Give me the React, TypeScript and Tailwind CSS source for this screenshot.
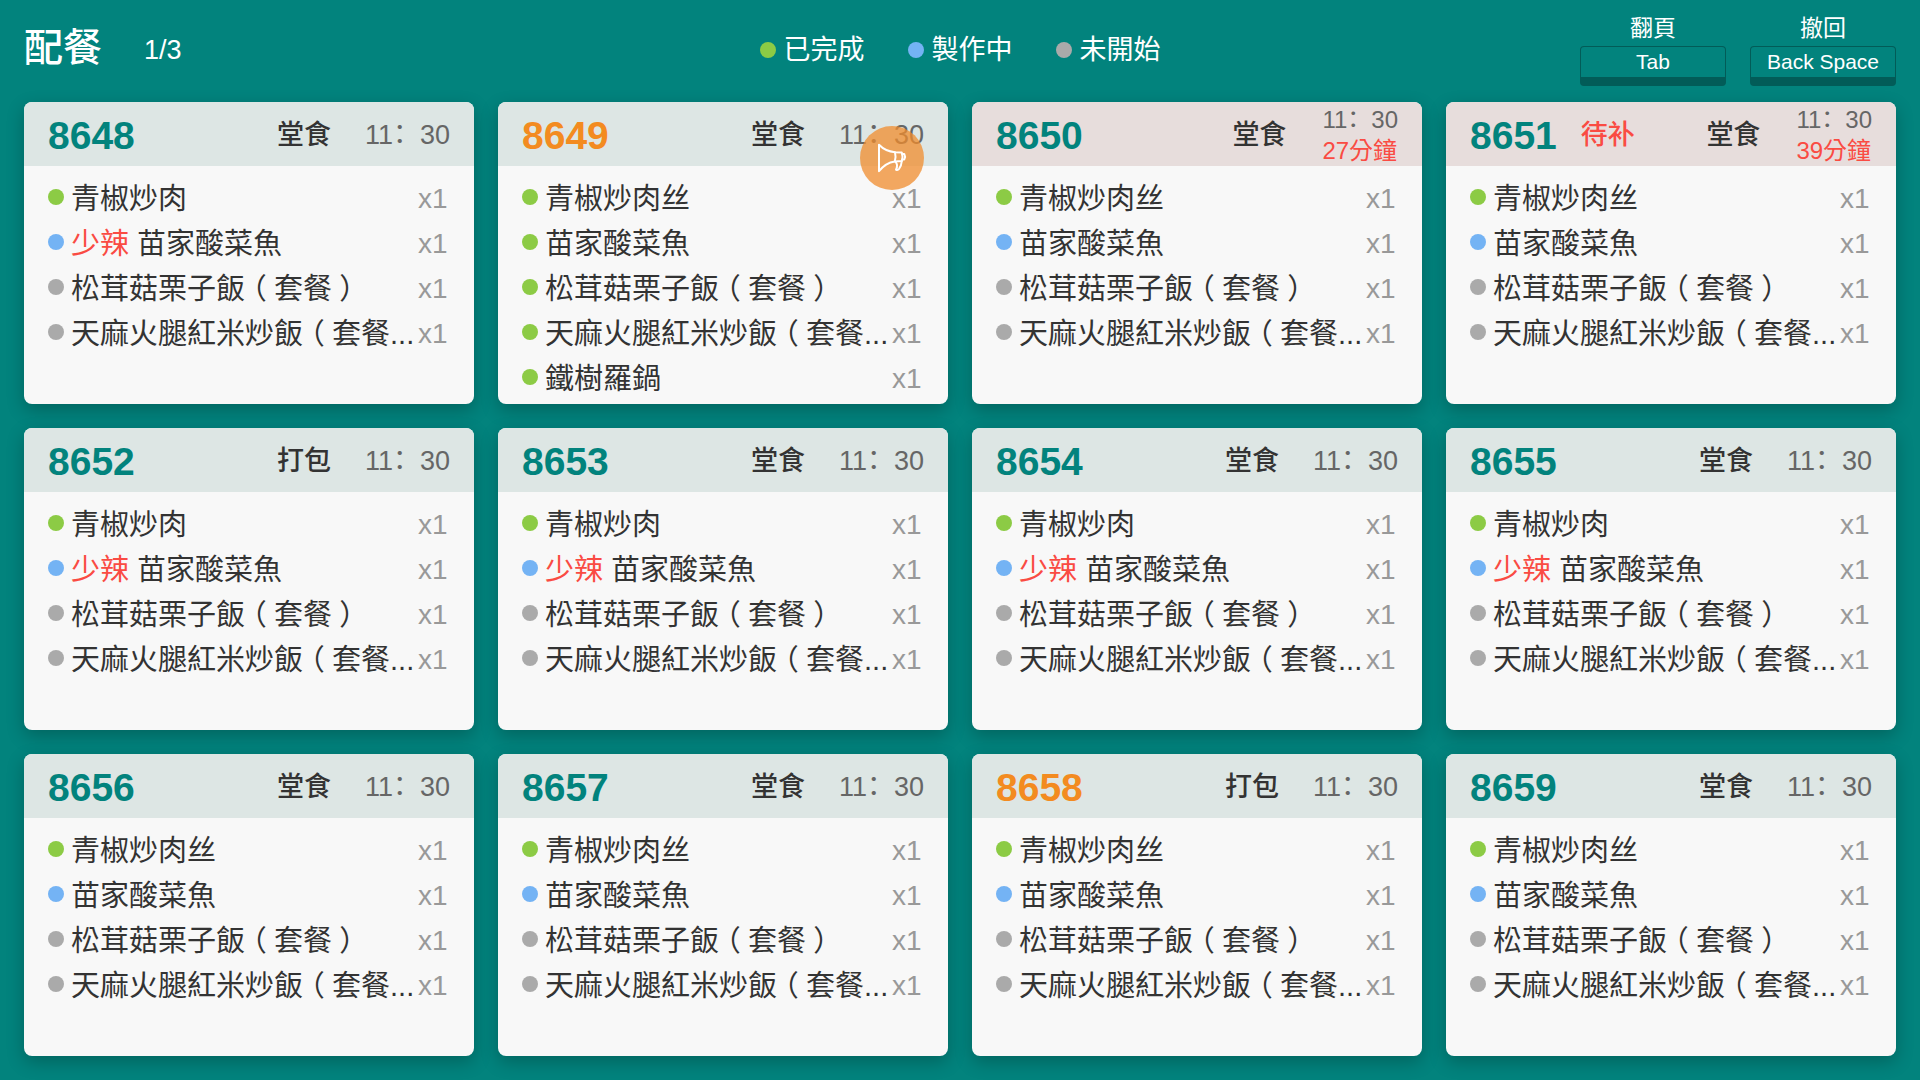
import React from "react";

type Status = "done" | "cooking" | "waiting";

interface Dish {
  name: string;
  status: Status;
  note?: string;
}

interface Order {
  id: string;
  kind: string;
  dishes: Dish[];
  highlight?: boolean;
  late?: string;
  tag?: string;
  calling?: boolean;
}

const dotColor: Record<Status, string> = {
  done: "bg-[#8ccb45]",
  cooking: "bg-[#74b3f4]",
  waiting: "bg-[#aaaaaa]",
};

const RICE = "松茸菇栗子飯（套餐）";
const HAM_RICE = "天麻火腿紅米炒飯（套餐...";

const mild: Dish[] = [
  { name: "青椒炒肉", status: "done" },
  { name: "苗家酸菜魚", status: "cooking", note: "少辣" },
  { name: RICE, status: "waiting" },
  { name: HAM_RICE, status: "waiting" },
];

const regular: Dish[] = [
  { name: "青椒炒肉丝", status: "done" },
  { name: "苗家酸菜魚", status: "cooking" },
  { name: RICE, status: "waiting" },
  { name: HAM_RICE, status: "waiting" },
];

const finished: Dish[] = [
  ...regular.map((d) => ({ ...d, status: "done" as Status })),
  { name: "鐵樹羅鍋", status: "done" },
];

const orders: Order[] = [
  { id: "8648", kind: "堂食", dishes: mild },
  { id: "8649", kind: "堂食", dishes: finished, highlight: true, calling: true },
  { id: "8650", kind: "堂食", dishes: regular, late: "27分鐘" },
  { id: "8651", kind: "堂食", dishes: regular, late: "39分鐘", tag: "待补" },
  { id: "8652", kind: "打包", dishes: mild },
  { id: "8653", kind: "堂食", dishes: mild },
  { id: "8654", kind: "堂食", dishes: mild },
  { id: "8655", kind: "堂食", dishes: mild },
  { id: "8656", kind: "堂食", dishes: regular },
  { id: "8657", kind: "堂食", dishes: regular },
  { id: "8658", kind: "打包", dishes: regular, highlight: true },
  { id: "8659", kind: "堂食", dishes: regular },
];

function Dot({ status }: { status: Status }) {
  return <span className={`size-4 shrink-0 rounded-full ${dotColor[status]}`} />;
}

/* Full-width brackets sit in the middle of their cell. */
function DishName({ name }: { name: string }) {
  return (
    <span>
      {name.split(/([（）])/).map((part, i) =>
        part === "（" || part === "）" ? (
          <span key={i} className="inline-block w-[1em] text-center [font-feature-settings:'halt']">{part}</span>
        ) : (
          part
        ),
      )}
    </span>
  );
}

/* The full-width colon leans towards the hour. */
function Clock({ hour, minute }: { hour: string; minute: string }) {
  return (
    <time className="whitespace-nowrap text-[#666666]">
      {hour}
      <span className="inline-block w-[1em] [font-feature-settings:'halt']">：</span>
      {minute}
    </time>
  );
}

function Megaphone() {
  return (
    <svg viewBox="0 0 64 64" className="size-16" fill="none" stroke="white" strokeWidth="2" strokeLinejoin="round" strokeLinecap="round" aria-hidden="true">
      <path d="M19 18.8V45.2C23 40 28 36.3 34.8 35.4L41.8 34.9C42.8 32 42.8 29.5 41.8 26.6L35 26.2C28 25.6 23.5 23.5 19 18.8Z" />
      <path d="M35 26.2C35.8 29.5 35.8 32.5 34.8 35.4" />
      <path d="M42.4 28H44.3C45.2 29.5 45.2 31.5 44.3 33.4H42.5" />
      <path d="M35.4 35.6C37.6 38 37.6 40.5 36 43.6C37 44.3 38.2 44 39 43C40.8 40.5 41.6 38 41.8 35" />
    </svg>
  );
}

function OrderCard({ order }: { order: Order }) {
  return (
    <article className="relative flex flex-col rounded-lg bg-[#f8f8f8] shadow-[0_6px_18px_rgba(0,0,0,0.24)]">
      <header className={`flex h-16 items-center rounded-t-lg px-6 ${order.late ? "bg-[#e7dddc]" : "bg-[#dde6e4]"}`}>
        <h2 className={`pt-0.5 text-[39px] leading-none font-bold ${order.highlight ? "text-[#f38b20]" : "text-[#02837d]"}`}>{order.id}</h2>
        {order.tag && <span className="ml-6 pt-0.5 text-[27px] leading-10 font-medium text-[#fa4b43]">{order.tag}</span>}
        <span className="ml-auto pt-0.5 text-[27px] leading-10 font-medium text-[#333333]">{order.kind}</span>
        {order.late ? (
          <div className="ml-9 flex flex-col pt-0.5 text-[24px] leading-[31px]">
            <Clock hour="11" minute="30" />
            <span className="text-[#fa4b43]">{order.late}</span>
          </div>
        ) : (
          <div className="ml-[34px] pt-0.5 text-[27px] leading-10">
            <Clock hour="11" minute="30" />
          </div>
        )}
      </header>
      <ul className="flex-1 px-6 pt-2">
        {order.dishes.map((dish) => (
          <li key={dish.name} className="flex h-[45px] items-center gap-[7px]">
            <Dot status={dish.status} />
            <span className="flex min-w-0 flex-1 gap-2 pt-1 text-[29px] leading-10 whitespace-nowrap text-[#333333]">
              {dish.note && <span className="text-[#fa4b43]">{dish.note}</span>}
              <DishName name={dish.name} />
            </span>
            <span className="w-8 shrink-0 pt-1 text-[28px] leading-10 text-[#999999]">x1</span>
          </li>
        ))}
      </ul>
      {order.calling && (
        <button type="button" aria-label="叫號" className="absolute top-6 right-6 size-16 rounded-full bg-[#f08c2d]/75">
          <Megaphone />
        </button>
      )}
    </article>
  );
}

function KeyHint({ label, keyName }: { label: string; keyName: string }) {
  return (
    <label className="flex w-[146px] flex-col items-center text-[23px] leading-9 text-white">
      {label}
      <button type="button" className="h-10 w-full rounded-sm border border-b-[9px] border-[#025c58] text-[21px] leading-[30px]">
        {keyName}
      </button>
    </label>
  );
}

function Legend({ status, label }: { status: Status; label: string }) {
  return (
    <li className="flex items-center gap-2">
      <Dot status={status} />
      <span>{label}</span>
    </li>
  );
}

export default function App() {
  return (
    <main className="flex min-h-screen flex-col bg-[#02837d] px-6 pb-6 font-['Liberation_Sans','Noto_Sans_CJK_TC',sans-serif]">
      <div className="grid h-[102px] grid-cols-[1fr_auto_1fr] items-start text-white">
        <div className="flex items-center pt-4">
          <h1 className="text-[39px] leading-[60px] font-medium">配餐</h1>
          <span className="ml-[42px] pt-1 text-[27px] leading-[60px]">1/3</span>
        </div>
        <ul className="flex gap-[43px] pt-[30px] text-[27px] leading-10">
          <Legend status="done" label="已完成" />
          <Legend status="cooking" label="製作中" />
          <Legend status="waiting" label="未開始" />
        </ul>
        <div className="flex justify-end gap-6 pt-2.5">
          <KeyHint label="翻頁" keyName="Tab" />
          <KeyHint label="撤回" keyName="Back Space" />
        </div>
      </div>
      <section className="grid flex-1 grid-cols-4 grid-rows-3 gap-6">
        {orders.map((order) => (
          <OrderCard key={order.id} order={order} />
        ))}
      </section>
    </main>
  );
}
